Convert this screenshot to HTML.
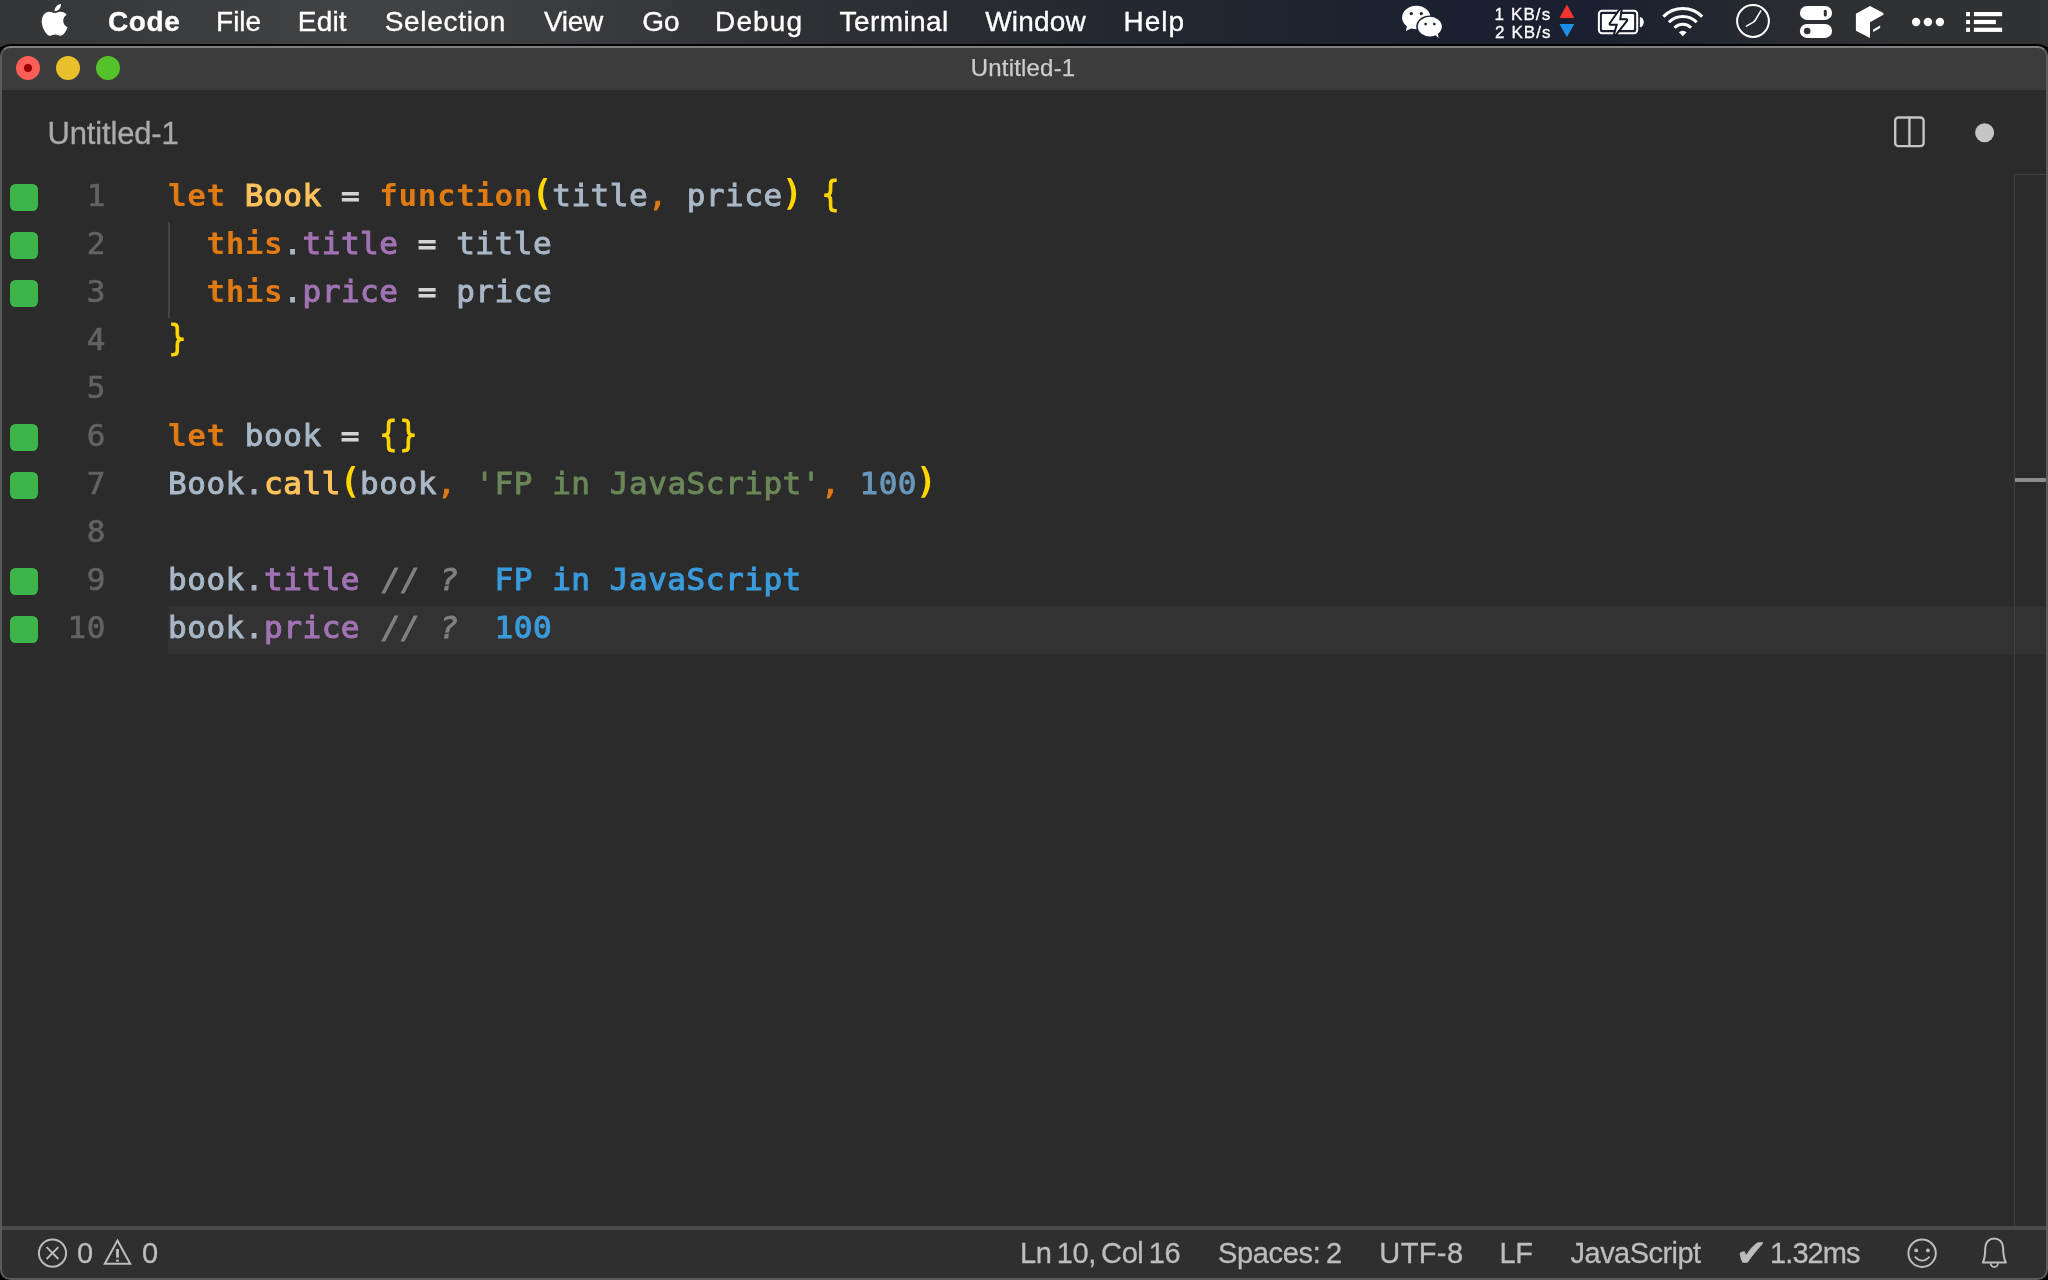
<!DOCTYPE html>
<html lang="en">
<head>
<meta charset="utf-8">
<title>Untitled-1</title>
<style>
*{box-sizing:border-box;margin:0;padding:0}
html,body{width:2048px;height:1280px;overflow:hidden;background:#000}
body{position:relative;font-family:"Liberation Sans",sans-serif;-webkit-font-smoothing:antialiased}
.abs{position:absolute}
/* menubar */
#menubar{will-change:transform;position:absolute;left:0;top:0;width:2048px;height:60px;
 background:linear-gradient(90deg,#343537 0.00%,#3a3b3d 7.32%,#414244 17.09%,#3e3f41 24.41%,#37383b 31.74%,#2f3034 39.06%,#2a2c31 46.39%,#252830 53.71%,#1f2430 63.48%,#1b2030 70.80%,#1b2030 78.12%,#22262f 83.01%,#2b2d32 87.89%,#303133 92.77%,#313234 100.00%)}
#menubar .mi{position:absolute;top:5px;height:34px;line-height:34px;font-size:28px;color:#fff;white-space:nowrap;-webkit-text-stroke:0.35px #fff}
.net{font-size:17px;line-height:18px;color:#fff;white-space:nowrap;letter-spacing:1.1px;-webkit-text-stroke:0.3px #fff}
/* window */
#win{will-change:transform;position:absolute;left:0;top:46px;width:2048px;height:1234px;background:#2b2b2b;border-radius:10px;overflow:hidden}
#winshadow{position:absolute;left:0;top:46px;width:2048px;height:1234px;border-radius:10px;box-shadow:0 0 0 2px #000,0 20px 0 20px #000}
#wborder{position:absolute;left:0;top:0;width:2048px;height:1234px;border-radius:10px;border:2px solid #5a5a5a;border-top-color:#808080}
#titlebar{position:absolute;left:0;top:2px;width:2048px;height:42px;background:#3c3c3c}
#title{position:absolute;left:970.7px;top:8px;font-size:24px;line-height:24px;color:#cccccc;letter-spacing:0.2px;white-space:nowrap;-webkit-text-stroke:0.25px #ccc}
.tl{position:absolute;top:8px;width:24px;height:24px;border-radius:50%}
/* tab */
#tab{position:absolute;left:47.5px;top:70px;font-size:31px;line-height:36px;color:#aaaaaa;white-space:nowrap;letter-spacing:-0.16px;-webkit-text-stroke:0.3px #aaa}
/* editor */
#editor{position:absolute;left:0;top:128px;width:2048px;height:1052px;font-family:"DejaVu Sans Mono","Liberation Mono",monospace;font-size:31px;letter-spacing:0.54px}
.ln{position:absolute;left:0;width:2048px;height:48px;line-height:48px;white-space:pre}
.g{position:absolute;left:10.3px;top:10px;width:27.3px;height:27.4px;border-radius:5.5px;background:#3cb648}
.n{position:absolute;top:-3px;left:40px;width:66px;text-align:right;color:#606366;-webkit-text-stroke:0.7px}
.c{position:absolute;top:-3px;left:168px;color:#a9b7c6;-webkit-text-stroke:0.95px}
.k{color:#e07a12;font-weight:bold;-webkit-text-stroke:0}
.f{color:#ffc25c;-webkit-text-stroke:1.15px}
.o{color:#d4d4d4}
.y{color:#ffd700;font-weight:bold;-webkit-text-stroke:0;display:inline-block;transform:scale(1.12,1.17);transform-origin:50% 38px}
.yb{font-weight:normal !important;-webkit-text-stroke:0.9px !important;transform:scale(0.96,1.15) !important}
.p{color:#a173b3;-webkit-text-stroke:1.1px}
.cm{color:#e07a12}
.s{color:#6a8759}
.nu{color:#6897bb}
.co{color:#808080;font-style:italic;position:relative;left:2.5px}
.q{color:#3a9bdc;-webkit-text-stroke:1.15px}
#curline{position:absolute;left:168px;top:432px;width:1878px;height:48px;background:#323232}
#guide{position:absolute;left:168px;top:48px;width:2px;height:96px;background:#444}
/* scrollbar */
#sbl{position:absolute;left:2014px;top:128px;width:1px;height:1052px;background:#414141}
#sbt{position:absolute;left:2014px;top:128px;width:32px;height:1px;background:#414141}
#sbc{position:absolute;left:2015px;top:432px;width:33px;height:4px;background:#8c8c8c}
/* status */
#status{position:absolute;left:0;top:1180px;width:2048px;height:54px;background:#2f2f2f;border-top:4px solid #4b4b4b}
#status .si{position:absolute;top:6px;font-size:29px;line-height:34px;color:#bdbdbd;white-space:nowrap;-webkit-text-stroke:0.3px #bdbdbd}
</style>
</head>
<body>
<div id="menubar">
 <span class="mi" style="left:107.9px;letter-spacing:0.62px;font-weight:bold">Code</span>
 <span class="mi" style="left:216.1px;letter-spacing:-0.05px">File</span>
 <span class="mi" style="left:297.8px;letter-spacing:0.18px">Edit</span>
 <span class="mi" style="left:384.7px;letter-spacing:0.69px">Selection</span>
 <span class="mi" style="left:543.9px;letter-spacing:-0.25px">View</span>
 <span class="mi" style="left:642.2px;letter-spacing:-0.08px">Go</span>
 <span class="mi" style="left:715.1px;letter-spacing:1.09px">Debug</span>
 <span class="mi" style="left:839.5px;letter-spacing:0.43px">Terminal</span>
 <span class="mi" style="left:985.3px;letter-spacing:0.15px">Window</span>
 <span class="mi" style="left:1123.5px;letter-spacing:1.03px">Help</span>

 <svg id="micons" class="abs" style="left:0;top:0" width="2048" height="44" viewBox="0 0 2048 44">
  <!-- apple -->
  <g transform="translate(38.8,4) scale(1.32)" fill="#fff"><path d="M12.152 6.896c-.948 0-2.415-1.078-3.96-1.04-2.04.027-3.91 1.183-4.961 3.014-2.117 3.675-.546 9.103 1.519 12.09 1.013 1.454 2.208 3.09 3.792 3.039 1.52-.065 2.09-.987 3.935-.987 1.831 0 2.35.987 3.96.948 1.637-.026 2.676-1.48 3.676-2.948 1.156-1.688 1.636-3.325 1.662-3.415-.039-.013-3.182-1.221-3.22-4.857-.026-3.04 2.48-4.494 2.597-4.559-1.429-2.09-3.623-2.324-4.39-2.376-2-.156-3.675 1.09-4.61 1.09zM15.53 3.83c.843-1.012 1.4-2.427 1.245-3.83-1.207.052-2.662.805-3.532 1.818-.78.896-1.454 2.338-1.273 3.714 1.338.104 2.715-.688 3.559-1.701"/></g>
  <!-- wechat -->
  <g fill="#fff">
   <ellipse cx="1416.3" cy="17.5" rx="14.2" ry="11.7"/>
   <path d="M1407.5 24 L1405.8 31 L1413 27.5Z"/>
   <ellipse cx="1429.8" cy="26.6" rx="13.6" ry="11.2" fill="#1d2230"/>
   <ellipse cx="1429.8" cy="26.6" rx="12" ry="9.8"/>
   <path d="M1434 34 L1438.6 38 L1437.6 32Z"/>
   <circle cx="1411.3" cy="13.6" r="1.6" fill="#1d2230"/><circle cx="1421.3" cy="13.6" r="1.6" fill="#1d2230"/>
   <circle cx="1425.6" cy="24.1" r="1.35" fill="#1d2230"/><circle cx="1434.3" cy="24.1" r="1.35" fill="#1d2230"/>
  </g>
  <!-- net arrows -->
  <path d="M1566.9 4.4 L1574.3 18 L1559.5 18Z" fill="#fb3232"/>
  <path d="M1566.9 37.3 L1574.3 24 L1559.5 24Z" fill="#1e8fe8"/>
  <!-- battery -->
  <rect x="1598.9" y="10.8" width="38.3" height="22.4" rx="3.2" fill="none" stroke="#fff" stroke-width="2"/>
  <rect x="1601.9" y="14" width="32.2" height="16" rx="1.2" fill="#fff"/>
  <path d="M1639.9 16.9 A3.9 5.2 0 0 1 1639.9 27.3Z" fill="#fff"/>
  <path d="M1620.6 9.6 L1610.6 23.8 L1618 23.8 L1615 34.6 L1626.2 20.2 L1619.2 20.2 Z" fill="#fff" stroke="#141a28" stroke-width="4" stroke-linejoin="round" paint-order="stroke"/>
  <!-- wifi -->
  <g fill="none" stroke="#fff" stroke-width="3" stroke-linecap="butt">
   <path d="M1663.4 16.6 A27.5 27.5 0 0 1 1702.2 16.6"/>
   <path d="M1668.9 22.2 A19.6 19.6 0 0 1 1696.7 22.2"/>
   <path d="M1674.5 27.7 A11.7 11.7 0 0 1 1691.1 27.7"/>
  </g>
  <path d="M1682.8 36.3 L1678.9 32.3 A5.6 5.6 0 0 1 1686.7 32.3Z" fill="#fff"/>
  <!-- clock-ish -->
  <circle cx="1753" cy="21" r="15.9" fill="none" stroke="#fff" stroke-width="2"/>
  <path d="M1760.8 10.8 L1755.4 20 Q1754.6 21.4 1753 22.3 L1746.4 26.2" fill="none" stroke="#fff" stroke-width="1.5" stroke-linecap="round"/>
  <!-- toggles -->
  <rect x="1799.9" y="5.9" width="32.2" height="14" rx="7" fill="#fff"/>
  <rect x="1799.9" y="23.9" width="32.2" height="14" rx="7" fill="#fff"/>
  <rect x="1823.8" y="9.8" width="3" height="6.6" rx="1.5" fill="#2c2e33"/>
  <circle cx="1807.2" cy="31" r="3.3" fill="#2e3033"/>
  <!-- cube -->
  <path d="M1870 5.9 L1883.4 13.1 L1883.4 14.8 L1870 22.2 L1870 37.9 L1855.9 30.8 L1855.9 13.7 Z" fill="#fff"/>
  <path d="M1873.2 29.4 L1880.1 25.5 L1880.1 28.1 L1873.2 32.1Z" fill="#fff"/>
  <!-- dots -->
  <circle cx="1916.1" cy="22" r="4.2" fill="#fff"/><circle cx="1927.9" cy="22" r="4.2" fill="#fff"/><circle cx="1939.9" cy="22" r="4.2" fill="#fff"/>
  <!-- list -->
  <g fill="#fff">
   <rect x="1966.1" y="12" width="3.9" height="4.2"/><rect x="1973.9" y="12" width="28.2" height="4.2"/>
   <rect x="1966.1" y="19.9" width="3.9" height="4.2"/><rect x="1973.9" y="19.9" width="22" height="4.2"/>
   <rect x="1966.1" y="27.7" width="3.9" height="4.2"/><rect x="1973.9" y="27.7" width="28.2" height="4.2"/>
  </g>
 </svg>
 <span class="abs net" style="left:1494.6px;top:5.5px">1 KB/s</span>
 <span class="abs net" style="left:1495px;top:24px">2 KB/s</span>
</div>
<div id="winshadow"></div>
<div id="win">
 <div id="titlebar">
  <div class="tl" style="left:16px;background:#ff5f57"></div><div class="abs" style="left:24px;top:16px;width:8px;height:8px;border-radius:50%;background:#990000"></div>
  <div class="tl" style="left:56px;background:#e9bf2b"></div>
  <div class="tl" style="left:96px;background:#53c22b"></div>
  <div id="title">Untitled-1</div>
 </div>

 <svg class="abs" style="left:1880px;top:60px" width="140" height="60" viewBox="1880 106 140 60">
  <rect x="1895.2" y="117.5" width="28.4" height="28.6" rx="3.2" fill="none" stroke="#c5c5c5" stroke-width="2.4"/>
  <path d="M1909.4 117.5 V146" stroke="#c5c5c5" stroke-width="2.4"/>
  <circle cx="1984.6" cy="132.8" r="9.5" fill="#c5c5c5"/>
 </svg>
 <div id="tab">Untitled-1</div>
 <div id="editor">
  <div id="curline"></div>
  <div id="guide"></div>
  <div class="ln" style="top:0px"><i class="g"></i><span class="n">1</span><span class="c"><span class="k">let</span> <span class="f">Book</span> <span class="o">=</span> <span class="k">function</span><span class="y">(</span>title<span class="cm">,</span> price<span class="y">)</span> <span class="y yb">{</span></span></div>
  <div class="ln" style="top:48px"><i class="g"></i><span class="n">2</span><span class="c">  <span class="k">this</span>.<span class="p">title</span> <span class="o">=</span> title</span></div>
  <div class="ln" style="top:96px"><i class="g"></i><span class="n">3</span><span class="c">  <span class="k">this</span>.<span class="p">price</span> <span class="o">=</span> price</span></div>
  <div class="ln" style="top:144px"><span class="n">4</span><span class="c"><span class="y yb">}</span></span></div>
  <div class="ln" style="top:192px"><span class="n">5</span></div>
  <div class="ln" style="top:240px"><i class="g"></i><span class="n">6</span><span class="c"><span class="k">let</span> book <span class="o">=</span> <span class="y yb">{</span><span class="y yb">}</span></span></div>
  <div class="ln" style="top:288px"><i class="g"></i><span class="n">7</span><span class="c">Book.<span class="f">call</span><span class="y">(</span>book<span class="cm">,</span> <span class="s">'FP in JavaScript'</span><span class="cm">,</span> <span class="nu">100</span><span class="y">)</span></span></div>
  <div class="ln" style="top:336px"><span class="n">8</span></div>
  <div class="ln" style="top:384px"><i class="g"></i><span class="n">9</span><span class="c">book.<span class="p">title</span> <span class="co">// ?</span>  <span class="q">FP in JavaScript</span></span></div>
  <div class="ln" style="top:432px"><i class="g"></i><span class="n">10</span><span class="c">book.<span class="p">price</span> <span class="co">// ?</span>  <span class="q">100</span></span></div>
 </div>
 <div id="sbl"></div><div id="sbt"></div><div id="sbc"></div>
 <div id="status">

  <svg class="abs" style="left:0;top:-4px" width="2048" height="54" viewBox="0 1226 2048 54">
   <g fill="none" stroke="#bdbdbd" stroke-width="2">
    <circle cx="52.5" cy="1253.1" r="13.6"/>
    <path d="M46.6 1247.2 L58.4 1259 M58.4 1247.2 L46.6 1259" stroke-width="1.9"/>
    <path d="M117.5 1240.6 L130.2 1263.8 L104.8 1263.8 Z" stroke-linejoin="miter"/>
    <circle cx="1922.1" cy="1253.2" r="13.7"/>
    <path d="M1914.8 1256.6 Q1922.1 1264.6 1929.6 1256.6" stroke-width="1.8"/>
    <path d="M1982.8 1262.6 L2005.9 1262.6 C2003.6 1258 2003.1 1253 2003.1 1247.4 A8.9 9 0 0 0 1985.3 1247.4 C1985.3 1253 1985 1258 1982.8 1262.6 Z" stroke-linejoin="round"/>
    <path d="M1990.6 1263.2 A3.7 3.9 0 0 0 1998 1263.2" stroke-width="1.8"/>
   </g>
   <g fill="#bdbdbd">
    <rect x="116.1" y="1249" width="2.8" height="8.6"/><rect x="116.1" y="1259.6" width="2.8" height="2"/>
    <circle cx="1916.2" cy="1250.4" r="1.9"/><circle cx="1927.9" cy="1250.4" r="1.9"/>
   </g>
  </svg>
  <span class="si" style="left:77.1px">0</span>
  <span class="si" style="left:142.1px">0</span>
  <span class="si" style="left:1020px;letter-spacing:-0.4px;word-spacing:-2.4px">Ln 10, Col 16</span>
  <span class="si" style="left:1218px;letter-spacing:-0.35px;word-spacing:-2px">Spaces: 2</span>
  <span class="si" style="left:1379.3px;letter-spacing:0.39px">UTF-8</span>
  <span class="si" style="left:1499.5px;letter-spacing:-0.43px">LF</span>
  <span class="si" style="left:1570.6px;letter-spacing:-0.54px">JavaScript</span>
  <span class="si" style="left:1735.5px;top:1px;font-family:'DejaVu Sans',sans-serif;font-size:38px;line-height:44px">✔</span>
  <span class="si" style="left:1770px;letter-spacing:-0.9px">1.32ms</span>
 </div>
 <div id="wborder"></div>
</div>
</body>
</html>
